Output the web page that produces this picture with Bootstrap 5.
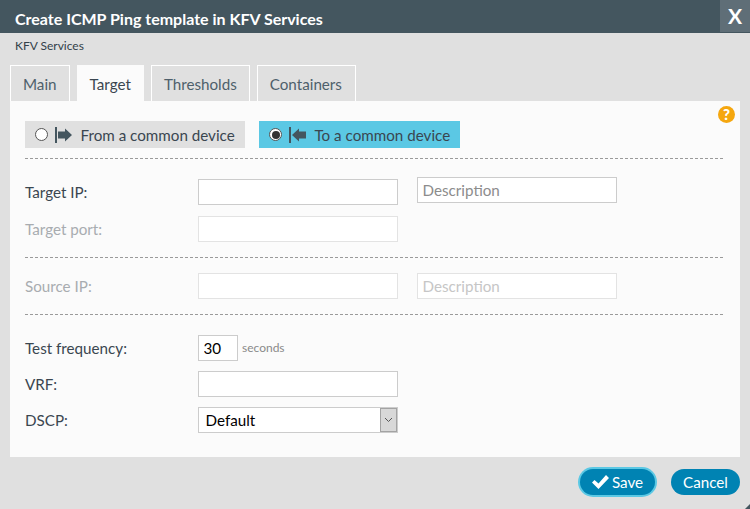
<!DOCTYPE html>
<html lang="en"><head><meta charset="utf-8"><title>Create ICMP Ping template</title>
<link rel="stylesheet" href="https://cdn.jsdelivr.net/npm/bootstrap@5.3.0/dist/css/bootstrap.min.css">
<style>
html,body{height:509px;overflow:hidden}
body{background:#e0e0e0;font-family:Lato,sans-serif;color:#3a4650;font-size:15.2px;position:relative}
.dlg-head{height:33px;background:#44565f;color:#fff;font-weight:700;font-size:16px;padding-left:15px;line-height:37px}
.dlg-x{position:absolute;right:0;top:0;width:30px;height:32px;background:#5f6e77;color:#fff;font-weight:700;font-size:21px;line-height:32px;text-align:center}
.dlg-sub{font-size:12px;line-height:16px;padding:5px 0 0 15px;height:32px;color:#33404a}
.tabrow{margin:0 10px;gap:7px;height:36px}
.tabitem{border:1px solid #fff;border-bottom:0;padding:0 12px;line-height:37px;color:#4e5f6b;font-size:15.2px;height:36px}
.tabitem:last-child{padding-right:13px}
.tabitem.on{background:#fbfbfb;border-color:#fbfbfb;color:#3a4650}
.pane{margin:0 10px;background:#fbfbfb;height:356px;padding:20px 17px 0 15px;position:relative}
.helpdot{position:absolute;right:5px;top:5px;width:17px;height:17px;border-radius:50%;background:#f5a70f;color:#fff;font-weight:900;font-size:15px;line-height:17px;text-align:center}
.seg{height:27px;padding-left:10px;font-size:15.2px;color:#3a4650;white-space:nowrap}
.seg.off{background:#e0e0e0;width:220px}
.seg.sel{background:#5bc8e4;width:201px;margin-left:14px}
.seg svg{flex:none;margin:0 8.500px 0 7px}
.seg-text{padding-top:2px}
.rdo{width:13px;height:13px;border-radius:50%;background:#fff;border:1px solid #555;display:inline-block;flex:none;position:relative}
.rdo.chk::after{content:"";position:absolute;inset:1.500px;border-radius:50%;background:#333}
.sep{border-top:1px dashed #9a9a9a}
.sep.first{margin-top:10px}
.sep.next{margin-top:15px}
.frow{display:flex;align-items:center}
.frow.g20{margin-top:20px}
.frow.g15{margin-top:15px}
.frow.g11{margin-top:11px}
.frow.g10{margin-top:10px}
.lab{width:173px;font-size:15.2px;flex:none}
.lab.dim{color:#a8acb0}
.fld{height:26px;border:1px solid #ccc;background:#fff;width:200px;padding:0 4.500px;font-size:15.2px;font-family:Lato,sans-serif;color:#000;border-radius:0;outline:0}
.fld.dim{border-color:#e3e3e3}
.fld::placeholder{color:#8c8c8c;opacity:1}
.fld.dim::placeholder{color:#c6c6c6}
.fld.short{width:40px}
.fldwrap{margin-left:19px}
.fldup{margin-top:-4px}
.units{font-size:12px;color:#8a8a8a;margin-left:4px}
.pick{height:26px;width:200px;border:1px solid #ccc;background:#fff;font-size:15.2px;color:#000;padding-left:6.500px}
.pick-btn{width:17px;height:24px;background:#d8d8d8;border:1px solid #a3a3a3;margin-left:auto}
.foot{padding:12px 10px 0 0;justify-content:flex-end;gap:16px}
.pill{background:#0083b3;color:#fff;border:0;border-radius:14px;height:26px;width:69px;font-size:15.2px;padding:0;line-height:26px;font-family:Lato,sans-serif}
.pill.main{box-shadow:0 0 0 2px #5bc8e4;width:75px;gap:3px}
.grip{position:absolute;right:0;bottom:0;width:0;height:0;border-style:solid;border-width:0 0 5px 5px;border-color:transparent transparent #44565f transparent}
</style></head>
<body>
<div class="dlg-head">Create ICMP Ping template in KFV Services</div>
<div class="dlg-x">X</div>
<div class="dlg-sub">KFV Services</div>
<div class="d-flex tabrow">
<div class="tabitem">Main</div><div class="tabitem on">Target</div><div class="tabitem">Thresholds</div><div class="tabitem">Containers</div>
</div>
<div class="pane">
<div class="helpdot">?</div>
<div class="d-flex">
<div class="seg off d-flex align-items-center"><span class="rdo"></span><svg width="17" height="16" viewBox="0 0 17 16"><rect width="2" height="16" fill="#44565f"/><path d="M3 4.500h7V1.500L17 8l-7 6.500v-3H3z" fill="#44565f"/></svg><span class="seg-text">From a common device</span></div>
<div class="seg sel d-flex align-items-center"><span class="rdo chk"></span><svg width="17" height="16" viewBox="0 0 17 16"><rect width="2" height="16" fill="#44565f"/><path d="M17 4.500h-7V1.500L3 8l7 6.500v-3h7z" fill="#44565f"/></svg><span class="seg-text">To a common device</span></div>
</div>
<div class="sep first"></div>
<div class="frow g20">
<span class="lab">Target IP:</span><input class="fld"><input class="fld fldwrap fldup" placeholder="Description">
</div>
<div class="frow g11">
<span class="lab dim">Target port:</span><input class="fld dim">
</div>
<div class="sep next"></div>
<div class="frow g15">
<span class="lab dim">Source IP:</span><input class="fld dim"><input class="fld dim fldwrap" placeholder="Description">
</div>
<div class="sep next"></div>
<div class="frow g20">
<span class="lab">Test frequency:</span><input class="fld short" value="30"><span class="units">seconds</span>
</div>
<div class="frow g10">
<span class="lab">VRF:</span><input class="fld">
</div>
<div class="frow g10">
<span class="lab">DSCP:</span>
<div class="pick d-flex align-items-center">Default<span class="pick-btn d-flex align-items-center justify-content-center"><svg width="9" height="6" viewBox="0 0 9 6"><path d="M1 1l3.500 3.500L8 1" fill="none" stroke="#555" stroke-width="1"/></svg></span></div>
</div>
</div>
<div class="d-flex foot">
<button class="pill main d-flex align-items-center justify-content-center"><svg width="17" height="14" viewBox="0 0 17 14"><path d="M0 7.500l2.500-2.500L6.500 8.500 14 0l3 3L6.500 14z" fill="#fff"/></svg>Save</button>
<button class="pill">Cancel</button>
</div>
<div class="grip"></div>
</body></html>
